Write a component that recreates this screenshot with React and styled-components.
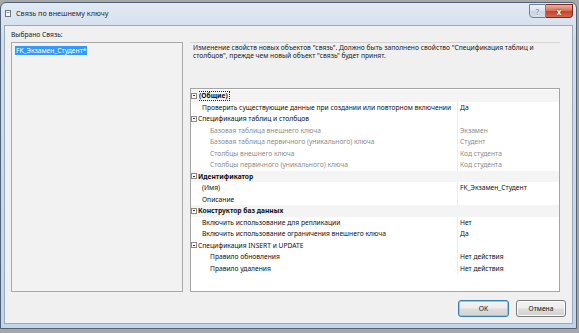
import React from 'react'
import styled, { createGlobalStyle } from 'styled-components'

const GlobalStyle = createGlobalStyle`
  html, body { margin: 0; padding: 0; }
  body {
    background: #a7a7a7;
    font-family: "Noto Sans", "Open Sans", sans-serif;
    font-size: 6.7px;
    color: #000;
  }
`

const Window = styled.div`
  box-sizing: border-box;
  width: 577px;
  height: 327px;
  margin-top: 2px;
  border: 1px solid #4f6277;
  border-radius: 6px 6px 0 0;
  background: linear-gradient(180deg, #e1e9f3 0%, #d0dcea 12%, #c4d5e8 100%);
  padding: 0 3px 4px 3px;
  display: flex;
  flex-direction: column;
`

const TitleBar = styled.div`
  height: 22px;
  display: flex;
  align-items: flex-start;
  flex-shrink: 0;
`

const TitleIcon = styled.svg`
  margin: 7px 0 0 1px;
  flex-shrink: 0;
`

const TitleText = styled.div`
  margin: 5px 0 0 5px;
  line-height: 10px;
  font-size: 7.2px;
  color: #1d2a38;
`

const CaptionButtons = styled.div`
  margin-left: auto;
  margin-top: 1px;
  display: flex;
`

const CaptionButton = styled.div`
  box-sizing: border-box;
  width: ${p => (p.$close ? 27 : 17)}px;
  height: 14px;
  display: flex;
  align-items: center;
  justify-content: center;
  font-size: 8px;
  font-weight: bold;
  color: ${p => (p.$close ? '#fff' : '#8d9aab')};
  border: 1px solid ${p => (p.$close ? '#7a2a1c' : '#6f8196')};
  border-left: ${p => (p.$close ? 'none' : undefined)};
  border-radius: ${p => (p.$close ? '0 0 4px 0' : '0 0 0 4px')};
  background: ${p =>
    p.$close
      ? 'linear-gradient(180deg, #eab1a2 0%, #d9735b 45%, #c4432b 55%, #d5694e 100%)'
      : 'linear-gradient(180deg, #eef2f7 0%, #dbe3ed 45%, #c9d5e3 55%, #d5dfeb 100%)'};
  text-shadow: ${p => (p.$close ? '0 0 2px #6b1f12' : '0 1px 0 #fff')};
`

const Client = styled.div`
  flex: 1;
  box-sizing: border-box;
  background: #f0f0f0;
  border: 1px solid #97aabf;
  padding: 3px 6px 0 6px;
  display: flex;
  flex-direction: column;
`

const Label = styled.div`
  line-height: 11px;
  margin-bottom: 2px;
  color: #1a1a1a;
`

const Main = styled.div`
  display: flex;
  gap: 7px;
  height: 250px;
  margin-right: 6px;
`

const ListBox = styled.div`
  box-sizing: border-box;
  width: 172px;
  flex-shrink: 0;
  border: 1px solid #a9a9a9;
  background: #f2f2f2;
  padding: 3px;
`

const SelectedItem = styled.span`
  display: inline-block;
  line-height: 9px;
  padding: 0 1px;
  background: #3399ff;
  color: #fff;
`

const RightPanel = styled.div`
  flex: 1;
  display: flex;
  flex-direction: column;
  min-width: 0;
`

const Description = styled.div`
  box-sizing: border-box;
  height: 46px;
  flex-shrink: 0;
  border-top: 1px solid #d5d5d5;
  padding: 1px 3px 0 3px;
  line-height: 8px;
  color: #1a1a1a;
`

const Grid = styled.div`
  flex: 1;
  box-sizing: border-box;
  border: 1px solid #a5a5a5;
  background: #fff;
  padding-top: 1px;
`

const Row = styled.div`
  display: flex;
  height: 11.5px;
  line-height: 11.5px;
  background: ${p => (p.$category ? '#f4f4f4' : '#fff')};
  font-weight: ${p => (p.$category ? 'bold' : 'normal')};
`

const Gutter = styled.div`
  width: 7px;
  flex-shrink: 0;
  display: flex;
  align-items: center;
`

const Expander = styled.span`
  box-sizing: border-box;
  width: 6px;
  height: 6px;
  border: 1px solid #8a8a8a;
  background: #fff;
  display: flex;
  align-items: center;
  justify-content: center;
  &::after {
    content: '';
    width: 2px;
    height: 1px;
    background: #333;
  }
`

const Name = styled.div`
  box-sizing: border-box;
  width: ${p => (p.$wide ? 'auto' : '259px')};
  flex: ${p => (p.$wide ? 1 : 'none')};
  padding-left: ${p => p.$indent}px;
  color: ${p => (p.$muted ? '#8c8c8c' : '#111')};
  white-space: nowrap;
  overflow: hidden;
`

const Focused = styled.span`
  display: inline-block;
  line-height: 8px;
  padding: 0 1px;
  border: 1px dotted #222;
  margin-left: -1px;
`

const Value = styled.div`
  flex: 1;
  border-left: 1px solid #ececec;
  padding-left: 2px;
  color: ${p => (p.$muted ? '#8c8c8c' : '#111')};
  white-space: nowrap;
`

const ButtonBar = styled.div`
  display: flex;
  justify-content: flex-end;
  gap: 7px;
  margin-top: 8px;
`

const Button = styled.div`
  box-sizing: border-box;
  width: ${p => p.$w}px;
  height: 17px;
  display: flex;
  align-items: center;
  justify-content: center;
  border-radius: 3px;
  border: 1px solid ${p => (p.$default ? '#3a7cb0' : '#7a7a7a')};
  background: linear-gradient(180deg, #f4f4f4 0%, #ececec 48%, #dddddd 52%, #d2d2d2 100%);
  box-shadow: ${p => (p.$default ? 'inset 0 0 0 1px #7fd0f4' : 'inset 0 0 0 1px #fbfbfb')};
  color: #111;
`

const rows = [
  { type: 'cat', name: '(Общие)', focused: true },
  { name: 'Проверить существующие данные при создании или повторном включении', value: 'Да', indent: 4 },
  { type: 'exp', name: 'Спецификация таблиц и столбцов' },
  { name: 'Базовая таблица внешнего ключа', value: 'Экзамен', indent: 12, muted: true },
  { name: 'Базовая таблица первичного (уникального) ключа', value: 'Студент', indent: 12, muted: true },
  { name: 'Столбцы внешнего ключа', value: 'Код студента', indent: 12, muted: true },
  { name: 'Столбцы первичного (уникального) ключа', value: 'Код студента', indent: 12, muted: true },
  { type: 'cat', name: 'Идентификатор' },
  { name: '(Имя)', value: 'FK_Экзамен_Студент', indent: 4 },
  { name: 'Описание', value: '', indent: 4 },
  { type: 'cat', name: 'Конструктор баз данных' },
  { name: 'Включить использование для репликации', value: 'Нет', indent: 4 },
  { name: 'Включить использование ограничения внешнего ключа', value: 'Да', indent: 4 },
  { type: 'exp', name: 'Спецификация INSERT и UPDATE' },
  { name: 'Правило обновления', value: 'Нет действия', indent: 12 },
  { name: 'Правило удаления', value: 'Нет действия', indent: 12 },
]

function PropertyRow({ row }) {
  if (row.type === 'cat') {
    return (
      <Row $category>
        <Gutter><Expander /></Gutter>
        <Name $wide $indent={0}>
          {row.focused ? <Focused>{row.name}</Focused> : row.name}
        </Name>
      </Row>
    )
  }
  if (row.type === 'exp') {
    return (
      <Row>
        <Gutter><Expander /></Gutter>
        <Name $indent={0}>{row.name}</Name>
        <Value />
      </Row>
    )
  }
  return (
    <Row>
      <Gutter />
      <Name $indent={row.indent} $muted={row.muted}>{row.name}</Name>
      <Value $muted={row.muted}>{row.value}</Value>
    </Row>
  )
}

export default function App() {
  return (
    <>
      <GlobalStyle />
      <Window>
        <TitleBar>
          <TitleIcon width="6" height="7" viewBox="0 0 6 7">
            <rect x="0.5" y="0.5" width="5" height="6" fill="#f4f4f4" stroke="#6d7785" />
            <rect x="1.5" y="2" width="3" height="1" fill="#9aa5b3" />
          </TitleIcon>
          <TitleText>Связь по внешнему ключу</TitleText>
          <CaptionButtons>
            <CaptionButton>?</CaptionButton>
            <CaptionButton $close>x</CaptionButton>
          </CaptionButtons>
        </TitleBar>
        <Client>
          <Label>Выбрано Связь:</Label>
          <Main>
            <ListBox>
              <SelectedItem>FK_Экзамен_Студент*</SelectedItem>
            </ListBox>
            <RightPanel>
              <Description>
                Изменение свойств новых объектов "связь".  Должно быть заполнено свойство "Спецификация таблиц и
                столбцов", прежде чем новый объект "связь" будет принят.
              </Description>
              <Grid>
                {rows.map((row, i) => (
                  <PropertyRow key={i} row={row} />
                ))}
              </Grid>
            </RightPanel>
          </Main>
          <ButtonBar>
            <Button $default $w={51}>OK</Button>
            <Button $w={50}>Отмена</Button>
          </ButtonBar>
        </Client>
      </Window>
    </>
  )
}
